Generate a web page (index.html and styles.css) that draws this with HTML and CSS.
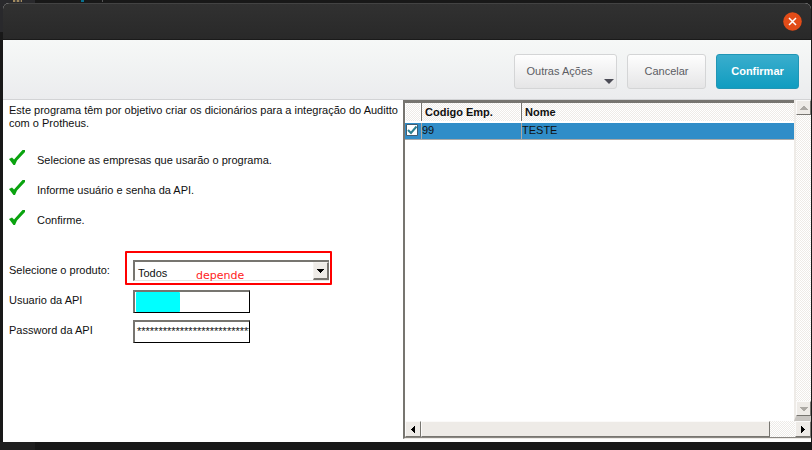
FILE: index.html
```
<!DOCTYPE html>
<html lang="pt-BR">
<head>
<meta charset="utf-8">
<title>Auditto</title>
<link rel="stylesheet" href="styles.css">
</head>
<body>
<i class="speck s1"></i><i class="speck s2"></i><i class="speck s3"></i><i class="speck s4"></i><i class="speck s5"></i>
<div class="window">
  <header class="titlebar">
    <button class="close" aria-label="Fechar"><svg width="19" height="19" viewBox="0 0 19 19"><circle cx="9.5" cy="9.5" r="9.3" fill="#e24c18"/><path d="M6 6l7 7M13 6l-7 7" stroke="#fff" stroke-width="1.5"/></svg></button>
  </header>
  <div class="toolbar">
    <button class="btn more">Outras Ações<svg class="caret" width="10" height="5"><path d="M0 0h10L5 5z" fill="#4c4c56"/></svg></button>
    <button class="btn cancel">Cancelar</button>
    <button class="btn primary">Confirmar</button>
  </div>
  <main class="content">
    <section class="form">
      <p class="intro">Este programa têm por objetivo criar os dicionários para a integração do Auditto<br>com o Protheus.</p>
      <ul class="steps">
        <li><svg width="17" height="16" viewBox="0 0 17 16"><path d="M0 9l3-1.500 2 2L13.500 0H16v2L8 10.500l-2 4.500H4.500z" fill="#0aa30f"/></svg><span>Selecione as empresas que usarão o programa.</span></li>
        <li><svg width="17" height="16" viewBox="0 0 17 16"><path d="M0 9l3-1.500 2 2L13.500 0H16v2L8 10.500l-2 4.500H4.500z" fill="#0aa30f"/></svg><span>Informe usuário e senha da API.</span></li>
        <li><svg width="17" height="16" viewBox="0 0 17 16"><path d="M0 9l3-1.500 2 2L13.500 0H16v2L8 10.500l-2 4.500H4.500z" fill="#0aa30f"/></svg><span>Confirme.</span></li>
      </ul>
      <div class="field">
        <span class="label">Selecione o produto:</span>
        <div class="highlight"><div class="select"><span>Todos</span><span class="drop"><svg width="9" height="4" shape-rendering="crispEdges"><path d="M1 0h7v1h-1v1h-1v1h-1v1h-1v-1h-1v-1h-1v-1h-1z"/></svg></span></div><span class="note">depende</span></div>
      </div>
      <div class="field"><span class="label">Usuario da API</span><div class="input"><i class="mask"></i></div></div>
      <div class="field"><span class="label">Password da API</span><div class="input pass">***************************</div></div>
    </section>
    <section class="grid">
      <div class="body">
        <div class="table">
          <div class="row head"><span></span><span>Codigo Emp.</span><span>Nome</span></div>
          <div class="row selected"><span><svg class="check" width="12" height="12"><path d="M.5 .5h11v11H.5z" fill="#fff" stroke="#405c70"/><path d="M2 6l3 3L10.500 2.500" fill="none" stroke="#2b7f90" stroke-width="2"/></svg></span><span>99</span><span>TESTE</span></div>
        </div>
        <div class="vscroll">
          <span class="sb"><svg width="8" height="4" shape-rendering="crispEdges"><path d="M3 0h2v1h1v1h1v1h1v1H0V3h1V2h1V1h1z" fill="#aca9a4"/></svg></span>
          <span class="sb"><svg width="8" height="4" shape-rendering="crispEdges"><path d="M0 0h8v1H7v1H6v1H5v1H3V3H2V2H1V1H0z" fill="#aca9a4"/></svg></span>
        </div>
      </div>
      <div class="hscroll">
        <span class="sb"><svg width="4" height="7" shape-rendering="crispEdges"><path d="M4 0v7H3V6H2V5H1V4H0V3h1V2h1V1h1V0z"/></svg></span>
        <span class="thumb"></span><span class="track"></span>
        <span class="sb end"><svg width="4" height="7" shape-rendering="crispEdges"><path d="M0 0v7h1V6h1V5h1V4h1V3H3V2H2V1H1V0z"/></svg></span>
      </div>
    </section>
  </main>
</div>
</body>
</html>
```
FILE: styles.css
```
* { box-sizing: border-box; }
body {
  margin: 0; width: 812px; height: 450px; padding: 3px 1px 0 3px; overflow: hidden;
  background: #181818; color: #101010;
  font: 11px/13px "Liberation Sans", Arial, sans-serif;
}
svg { display: block; }
button { font: inherit; padding: 0; border: 0; }
.speck { position: absolute; }
.s1 { left: 0; top: 0; width: 35px; height: 32px; background: #29292c; }
.s2 { left: 13px; top: 0; width: 9px; height: 2px; background: repeating-linear-gradient(90deg, #a18a5e 0 2px, #4a4540 2px 4px); }
.s3 { left: 81px; top: 0; width: 3px; height: 2px; background: #08718f; }
.s4 { left: 102px; top: 0; width: 1px; height: 2px; background: #555; }
.s5 { left: 0; top: 442px; width: 35px; height: 8px; background: #202020; }
.window { position: relative; height: 439px; display: flex; flex-direction: column; background: #fff; border-radius: 6px 6px 0 0; overflow: hidden; }
.titlebar {
  height: 37px; display: flex; justify-content: flex-end; padding: 8px 9px 0 0;
  background: linear-gradient(#313131, #292929); border-top: 1px solid #434343; border-bottom: 1px solid #1a1a1a;
}
.close { width: 19px; height: 19px; background: none; }
.toolbar {
  height: 60px; display: flex; justify-content: flex-end; gap: 10px; padding: 14px 12px 0 0;
  background: linear-gradient(#f6f8f7, #ebecee); border-bottom: 1px solid #d2d3d5;
}
.btn {
  position: relative; height: 35px; border: 1px solid #d4d5d6; border-radius: 3px;
  background: linear-gradient(#fefefe, #e5e5e6); color: #5c5d63;
}
.more { width: 103px; padding-right: 12px; }
.caret { position: absolute; right: 2px; bottom: 4px; }
.cancel { width: 79px; }
.primary { width: 83px; color: #fff; font-weight: bold; border-color: #2196b5; background: linear-gradient(#3aadcd, #109dc0); }
.content { flex: 1; display: flex; min-height: 0; }
.form { width: 400px; padding: 4px 0 0 6px; }
.intro { margin: 0; white-space: nowrap; }
.steps { list-style: none; margin: 16px 0 19px; padding: 0; }
.steps li { height: 30px; display: flex; align-items: center; padding-bottom: 1px; }
.steps svg { width: 17px; margin: -5px 11px 0 0; }
.field { height: 30px; display: flex; align-items: center; }
.label { width: 124px; }
.highlight { position: relative; width: 207px; height: 34px; margin: -4px 0 0 -8px; border: 2px solid #f00; border-radius: 1px; padding: 7px 1px 0 6px; }
.select {
  height: 21px; display: flex; justify-content: space-between; padding-left: 3px;
  border: 2px solid #777570; border-right-width: 0; border-bottom: 1px solid #e6e4df;
}
.select > span:first-child { padding-top: 5px; }
.drop { width: 16px; height: 18px; display: flex; align-items: center; justify-content: center; background: #eeebe7; border: 1px solid #f4f2ef; border-right: 2px solid #777570; border-bottom: 2px solid #777570; }
.note { position: absolute; left: 69px; top: 16px; color: #f22; font: 11px/14px "DejaVu Sans", sans-serif; }
.input { width: 117px; height: 23px; margin-top: 3px; border: 1px solid #000; border-top: 2px solid #777570; border-left: 2px solid #777570; overflow: hidden; }
.mask { display: block; width: 44px; height: 20px; margin-left: 1px; background: #0ff; border-radius: 1px; }
.pass { padding: 3px 0 0 2px; white-space: nowrap; }
.grid { flex: 1; height: 339px; display: flex; flex-direction: column; border-left: 2px solid #777570; border-bottom: 1px solid #eeebe7; }
.body { flex: 1; display: flex; }
.table { width: 389px; border-top: 3px solid #777570; }
.row { display: grid; grid-template-columns: 16px 100px 1fr; }
.head { height: 20px; font-weight: bold; border-bottom: 2px solid #fff; }
.head span, .track, .vscroll { background: repeating-conic-gradient(#fff 0 25%, #eeebe7 0 50%) 0 0 / 2px 2px; }
.head span { padding: 3px 0 0 3px; border-left: 1px solid #fff; }
.head span + span { border-left: 1px solid #777570; box-shadow: -1px 0 #fff; }
.selected { height: 17px; background: #308dc8; border-bottom: 1px solid #aaa9a8; }
.selected span { padding-top: 1px; }
.selected span + span { border-left: 1px solid #b2a9a2; }
.check { margin: 0 0 0 1px; }
.vscroll { width: 17px; display: flex; flex-direction: column; justify-content: space-between; border-left: 2px solid #eeebe7; border-bottom: 5px solid #c9c6c2; }
.sb { width: 15px; height: 15px; flex: none; display: flex; align-items: center; justify-content: center; background: #eeebe7; border: 1px solid #fbfaf9; border-right: 1px solid #777570; border-bottom: 1px solid #777570; }
.hscroll { height: 17px; display: flex; border-bottom: 1px solid #8a8782; }
.hscroll .sb { height: 16px; width: 16px; }
.thumb { width: 349px; background: #eeebe7; border: 1px solid #fbfaf9; border-right: 1px solid #777570; border-bottom: 1px solid #777570; }
.track { flex: 1; }
```
